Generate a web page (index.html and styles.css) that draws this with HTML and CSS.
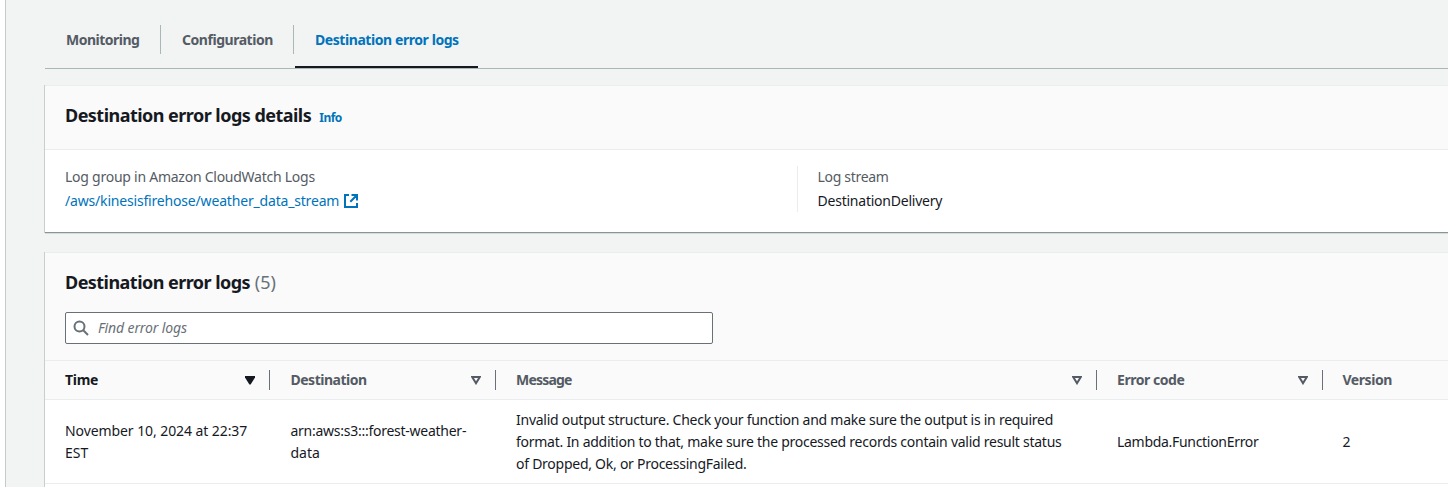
FILE: index.html
```html
<!DOCTYPE html>
<html lang="en">
<head>
<meta charset="utf-8">
<title>Destination error logs</title>
<link rel="stylesheet" href="styles.css">
</head>
<body>
<main class="page">
  <nav class="tabs">
    <a class="tab t-monitoring"><span>Monitoring</span></a>
    <a class="tab t-config"><span>Configuration</span></a>
    <a class="tab t-logs active"><span>Destination error logs</span></a>
  </nav>

  <section class="card details">
    <header class="details-head">
      <h2 class="title-details">Destination error logs details</h2><a class="info">Info</a>
    </header>
    <div class="details-body">
      <div class="field">
        <div class="label label-group">Log group in Amazon CloudWatch Logs</div>
        <a class="link"><span class="link-text">/aws/kinesisfirehose/weather_data_stream</span><svg class="ext" width="16" height="16" viewBox="0 0 16 16" fill="none" stroke="currentColor" stroke-width="2"><path d="M6 2H2v12h12v-4M8.5 2H14v5.5M14 2L7.3 8.7"/></svg></a>
      </div>
      <div class="field second">
        <div class="label label-stream">Log stream</div>
        <div class="value">DestinationDelivery</div>
      </div>
    </div>
  </section>

  <section class="card logs">
    <header class="logs-head">
      <h2><span class="title-logs">Destination error logs</span> <span class="count">(5)</span></h2>
      <div class="search">
        <svg width="16" height="16" viewBox="0 0 16 16" fill="none" stroke="currentColor" stroke-width="2"><circle cx="6.5" cy="6.5" r="5"/><path d="M10 10l5 5"/></svg>
        <span class="placeholder">Find error logs</span>
      </div>
    </header>
    <div class="grid thead">
      <div class="th sorted"><span class="h-time">Time</span><svg width="10" height="9" viewBox="0 0 10 9"><path d="M0 0h10v1.5L5.6 8.5H4.4L0 1.5z" fill="currentColor"/></svg></div>
      <div class="th"><span class="h-dest">Destination</span><svg width="10" height="9" viewBox="0 0 10 9"><path d="M1.2 1h7.6L5 7.2z" fill="none" stroke="currentColor" stroke-width="2"/></svg></div>
      <div class="th"><span class="h-msg">Message</span><svg width="10" height="9" viewBox="0 0 10 9"><path d="M1.2 1h7.6L5 7.2z" fill="none" stroke="currentColor" stroke-width="2"/></svg></div>
      <div class="th"><span class="h-code">Error code</span><svg width="10" height="9" viewBox="0 0 10 9"><path d="M1.2 1h7.6L5 7.2z" fill="none" stroke="currentColor" stroke-width="2"/></svg></div>
      <div class="th last"><span class="h-ver">Version</span></div>
    </div>
    <div class="grid row">
      <div class="td"><span class="c-time">November 10, 2024 at 22:37</span><br>EST</div>
      <div class="td"><span class="c-arn">arn:aws:s3:::forest-weather-</span><br>data</div>
      <div class="td"><span class="c-msg">Invalid output structure. Check your function and make sure the output is in required</span><br><span class="c-msg">format. In addition to that, make sure the processed records contain valid result status</span><br><span class="c-msg">of Dropped, Ok, or ProcessingFailed.</span></div>
      <div class="td"><span class="c-code">Lambda.FunctionError</span></div>
      <div class="td">2</div>
    </div>
  </section>
</main>
</body>
</html>
```
FILE: styles.css
```css
* { box-sizing: border-box; }
body {
  margin: 0;
  height: 487px;
  overflow: hidden;
  background: #fff;
  color: #16191f;
  font: 14px/22px "Noto Sans", sans-serif;
}
h2 { margin: 0; font-size: 18px; line-height: 22px; font-weight: 700; white-space: nowrap; }
span, .label, .value { white-space: nowrap; }
.page {
  margin-left: 5px;
  height: 487px;
  padding: 25px 0 0 39px;
  border-left: 1px solid #c6cacb;
  background: #f2f3f3;
  overflow: hidden;
}
.tabs { display: flex; height: 44px; border-bottom: 1px solid #aab7b8; }
.tab {
  height: 29px;
  padding: 4px 20px 0 21px;
  border-right: 1px solid #aab7b8;
  color: #545b64;
  font-weight: 700;
}
.t-monitoring { width: 116px; letter-spacing: -0.5px; }
.t-config { width: 133px; letter-spacing: -0.46px; }
.tab.active {
  width: 183px;
  height: 43px;
  margin-left: 1px;
  padding-left: 20px;
  border-right: 0;
  border-bottom: 2px solid #16191f;
  color: #0073bb;
  letter-spacing: -0.43px;
}
.card { background: #fff; border-top: 1px solid #eaeded; box-shadow: -1px 0 0 #c9cdcd; }
.details { margin-top: 16px; height: 148px; border-bottom: 1px solid #879596; box-shadow: -1px 0 0 #c9cdcd, 0 1px 0 #d5dbdb; }
.details-head {
  display: flex;
  align-items: baseline;
  height: 64px;
  padding: 18px 20px 0;
  background: #fafafa;
  border-bottom: 1px solid #eaeded;
}
.title-details { letter-spacing: -0.53px; }
.info { margin-left: 8px; color: #0073bb; font-size: 12px; font-weight: 700; letter-spacing: -0.5px; }
.details-body { display: grid; grid-template-columns: 752px 1fr; padding-top: 16px; }
.field { height: 46px; padding-left: 20px; }
.second { padding-left: 19.5px; border-left: 1px solid #eaeded; }
.label { color: #545b64; height: 24px; }
.label-group { letter-spacing: -0.25px; }
.label-stream { letter-spacing: -0.3px; }
.value { letter-spacing: -0.23px; }
.link { display: flex; align-items: center; color: #0073bb; }
.link-text { letter-spacing: -0.18px; }
.ext { margin-left: 3.5px; }
.logs { margin-top: 19px; height: 260px; }
.logs-head { height: 108px; padding: 18px 20px 0; background: #fafafa; border-bottom: 1px solid #eaeded; }
.title-logs { letter-spacing: -0.54px; }
.count { color: #687078; font-weight: 400; }
.search {
  display: flex;
  align-items: center;
  width: 648px;
  height: 32px;
  margin-top: 19px;
  padding-left: 7px;
  border: 1px solid #687078;
  border-radius: 2px;
  background: #fff;
  color: #687078;
}
.placeholder { margin-left: 9px; font-style: italic; letter-spacing: -0.12px; }
.grid { display: grid; grid-template-columns: 225px 226px 601px 226px 1fr; }
.thead { height: 39px; background: #fafafa; border-bottom: 1px solid #eaeded; }
.th {
  display: flex;
  align-items: center;
  justify-content: space-between;
  height: 20px;
  margin-top: 9px;
  padding: 0 14px 0 20px;
  border-right: 1px solid #687078;
  color: #545b64;
  font-weight: 700;
}
.th.last { border-right: 0; }
.sorted { color: #16191f; }
.h-time { letter-spacing: -0.3px; }
.h-dest { letter-spacing: -0.5px; }
.h-msg { letter-spacing: -0.8px; }
.h-code, .h-ver { letter-spacing: -0.45px; }
.row { height: 84px; align-items: center; border-bottom: 1px solid #eaeded; }
.td { padding-left: 20px; }
.th:nth-child(2), .td:nth-child(2) { padding-left: 20.5px; }
.th:nth-child(5), .td:nth-child(5) { padding-left: 19.5px; }
.c-time { letter-spacing: -0.08px; }
.c-arn { letter-spacing: -0.26px; }
.c-msg { letter-spacing: -0.26px; }
.c-code { letter-spacing: -0.3px; }
```
